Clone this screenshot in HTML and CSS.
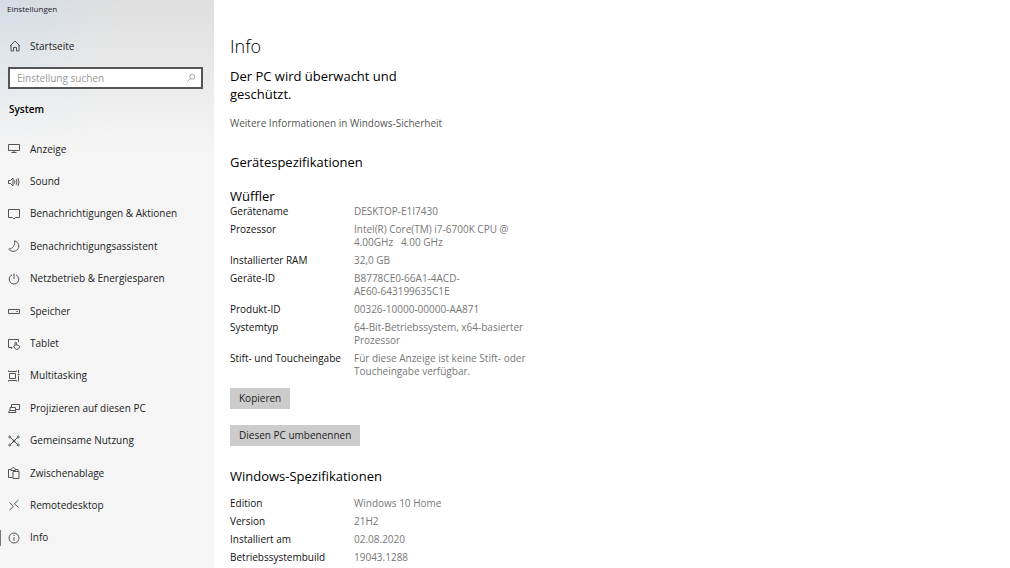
FILE: index.html
```html
<!DOCTYPE html>
<html lang="de">
<head>
  <meta charset="UTF-8" />
  <meta name="viewport" content="width=device-width, initial-scale=1" />
  <title>Einstellungen</title>
  <link rel="stylesheet" href="styles.css">
</head>
<body>
  <aside class="sidebar">
    <div class="window-title">Einstellungen</div>
    <a class="home" href="#">
      <svg class="icon" viewBox="0 0 12 12"><path d="M1 6 6 1l5 5M2 5v6h2.500V7.500h3V11H10V5" /></svg>
      <span>Startseite</span>
    </a>
    <form class="search">
      <input type="text" placeholder="Einstellung suchen" aria-label="Einstellung suchen" />
      <svg class="icon" viewBox="0 0 12 12"><circle cx="7.500" cy="4.500" r="3" /><path d="M5.400 6.600 1.500 10.500" /></svg>
    </form>
    <h2>System</h2>
    <nav class="nav">
      <a href="#">
        <svg class="icon" viewBox="0 0 12 12"><path d="M.5 1.500h11v6H.5zM6 7.500v2M3.500 9.500h5" /></svg>
        <span>Anzeige</span>
      </a>
      <a href="#">
        <svg class="icon" viewBox="0 0 12 12"><path d="M.5 4.500h2L5 2v8L2.500 7.500h-2zM6.500 4.300q1 1.700 0 3.400M8.200 3.200q1.600 2.800 0 5.600M9.900 2q2.400 4 0 8" /></svg>
        <span>Sound</span>
      </a>
      <a href="#">
        <svg class="icon" viewBox="0 0 12 12"><path d="M.5 1.500h11v8h-4L6 11 4.500 9.500h-4z" /></svg>
        <span>Benachrichtigungen &amp; Aktionen</span>
      </a>
      <a href="#">
        <svg class="icon" viewBox="0 0 12 12"><path d="M6.500.8C7.400 5 5 8.600.8 9.200 3 11.800 7 12 9.300 9.800 12.200 6.800 10.800 2 6.500.8z" /></svg>
        <span>Benachrichtigungsassistent</span>
      </a>
      <a href="#">
        <svg class="icon" viewBox="0 0 12 12"><path d="M6 .5V6M4 1.900a4.800 4.800 0 1 0 4 0" /></svg>
        <span>Netzbetrieb &amp; Energiesparen</span>
      </a>
      <a href="#">
        <svg class="icon" viewBox="0 0 12 12"><path d="M.5 4.500h11v4H.5zM8.500 6.500H10" /></svg>
        <span>Speicher</span>
      </a>
      <a href="#">
        <svg class="icon" viewBox="0 0 12 12"><path d="M4 9.500H.5v-8h10V4M3 11l1-1.500H2.500M7 8V4.500q.7-.8 1.400 0V7l2.300.5q1 .3.800 1.300-.3 2.700-2.800 2.700-1.700 0-3.200-3.200Q6.200 7.400 7 8.300" /></svg>
        <span>Tablet</span>
      </a>
      <a href="#">
        <svg class="icon" viewBox="0 0 12 12"><path d="M1.500 3.500h6v5h-6zM.5 .5v1h8v-1M.5 11.500v-1h8v1M10.500 0v3M10.500 6v5.500" /><path class="dot" d="M10.200 4h.8v1h-.8z" /></svg>
        <span>Multitasking</span>
      </a>
      <a href="#">
        <svg class="icon" viewBox="0 0 12 12"><path d="M3.500 5V2.500h8v5H8M2 5.500h5.500v3H2zM.5 10.500h7.500l-.5-2H1.500z" /></svg>
        <span>Projizieren auf diesen PC</span>
      </a>
      <a href="#">
        <svg class="icon" viewBox="0 0 12 12"><path d="M2.500 2.500 9.500 9.500M9.500 2.500 2.500 9.500" /><circle cx="1.800" cy="2" r="1" /><circle cx="10.200" cy="2" r="1" /><circle cx="1.800" cy="10" r="1" /><circle cx="10.200" cy="10" r="1" /><circle class="dot" cx="6" cy="6" r="1" /></svg>
        <span>Gemeinsame Nutzung</span>
      </a>
      <a href="#">
        <svg class="icon" viewBox="0 0 12 12"><path d="M4.500 10.500h-4v-8H3M7.500 2.500H10V4M3 3.500V2q.5 0 1-.5.5-1 1.300-1t1.200 1q.5.500 1 .5v1.500zM5 4.500h6v7H5z" /></svg>
        <span>Zwischenablage</span>
      </a>
      <a href="#">
        <svg class="icon" viewBox="0 0 12 12"><path d="M1.500 3.500 5.500 7.300 1.500 11M10.500 1 6.500 4.800l4 3.700" /></svg>
        <span>Remotedesktop</span>
      </a>
      <a class="active" href="#" aria-current="page">
        <svg class="icon" viewBox="0 0 12 12"><circle cx="6" cy="6" r="5" /><path d="M6 5.200V9M6 3v1" /></svg>
        <span>Info</span>
      </a>
    </nav>
  </aside>

  <main class="main">
    <h1>Info</h1>
    <p class="status">Der PC wird überwacht und geschützt.</p>
    <a class="security" href="#">Weitere Informationen in Windows-Sicherheit</a>

    <h2>Gerätespezifikationen</h2>
    <h3>Wüffler</h3>
    <table class="specs">
      <tr><th scope="row">Gerätename</th><td>DESKTOP-E1I7430</td></tr>
      <tr><th scope="row">Prozessor</th><td>Intel(R) Core(TM) i7-6700K CPU @ 4.00GHz &nbsp; 4.00 GHz</td></tr>
      <tr><th scope="row">Installierter RAM</th><td>32,0 GB</td></tr>
      <tr><th scope="row">Geräte-ID</th><td>B8778CE0-66A1-4ACD-<br>AE60-643199635C1E</td></tr>
      <tr><th scope="row">Produkt-ID</th><td>00326-10000-00000-AA871</td></tr>
      <tr><th scope="row">Systemtyp</th><td>64-Bit-Betriebssystem, x64-basierter Prozessor</td></tr>
      <tr><th scope="row">Stift- und Toucheingabe</th><td>Für diese Anzeige ist keine Stift- oder Toucheingabe verfügbar.</td></tr>
    </table>

    <div class="actions">
      <button type="button">Kopieren</button>
      <button type="button">Diesen PC umbenennen</button>
    </div>

    <h2>Windows-Spezifikationen</h2>
    <table class="specs">
      <tr><th scope="row">Edition</th><td>Windows 10 Home</td></tr>
      <tr><th scope="row">Version</th><td>21H2</td></tr>
      <tr><th scope="row">Installiert am</th><td>02.08.2020</td></tr>
      <tr><th scope="row">Betriebssystembuild</th><td>19043.1288</td></tr>
    </table>
  </main>
</body>
</html>
```
FILE: styles.css
```css
* {
  box-sizing: border-box;
}

body {
  margin: 0;
  font-family: "Open Sans", "Noto Sans", sans-serif;
  font-size: 10px;
  line-height: 13px;
  color: #222;
  background: #fff;
  display: flex;
  height: 100vh;
  overflow: hidden;
}

a {
  color: inherit;
  text-decoration: none;
}

h1, h2, h3, p {
  margin: 0;
  font-weight: 400;
}

.icon {
  width: 12px;
  height: 12px;
  flex: none;
  fill: none;
  stroke: #555;
  stroke-width: 1;
}

.icon .dot {
  fill: #444;
}

/* Sidebar */
.sidebar {
  width: 214px;
  flex: none;
  display: flex;
  flex-direction: column;
  padding-bottom: 14px;
  background:
    linear-gradient(to bottom, transparent, #f5f5f5 150px),
    linear-gradient(to right, #d3dce5, #dfdfdf 120px);
}

.window-title {
  padding: 3px 7px 0;
  font-size: 8px;
  line-height: 12px;
}

.home {
  display: flex;
  align-items: center;
  gap: 9px;
  padding: 0 9px;
  margin-top: 21px;
  line-height: 20px;
}

.search {
  display: flex;
  align-items: center;
  height: 22px;
  margin: 11px 11px 0 8px;
  padding: 0 5px 0 7px;
  border: 2px solid #555;
  background: #fff;
}

.search input {
  flex: 1;
  min-width: 0;
  padding: 0;
  border: none;
  outline: none;
  font: inherit;
  background: none;
}

.search input::placeholder {
  color: #999;
}

.search .icon {
  width: 10px;
  height: 10px;
  stroke: #999;
}

.sidebar h2 {
  margin: 14px 9px 17px;
  font-size: 10px;
  font-weight: 600;
  color: #000;
}

.nav {
  flex: 1;
  display: flex;
  flex-direction: column;
}

.nav a {
  flex: 1;
  display: flex;
  align-items: center;
  gap: 10px;
  padding-left: 8px;
}

.nav .active {
  background: linear-gradient(#777, #777) left center / 1px 16px no-repeat;
}

/* Content */
.main {
  flex: 1;
  padding: 34px 16px 0;
}

.main h1 {
  font-size: 18px;
  font-weight: 300;
  line-height: 24px;
  color: #000;
}

.status {
  max-width: 180px;
  margin-top: 9px;
  font-size: 13px;
  line-height: 18px;
  color: #000;
}

.security {
  display: block;
  margin-top: 14px;
  color: #555;
}

.main h2 {
  margin-top: 23px;
  font-size: 13px;
  line-height: 18px;
  color: #000;
}

.main h3 {
  margin-top: 17px;
  font-size: 13px;
  line-height: 17px;
  color: #000;
}

.specs {
  border-collapse: collapse;
  width: 304px;
}

.specs th, .specs td {
  padding: 0 0 5px;
  text-align: left;
  vertical-align: top;
  font-weight: 400;
}

.specs th {
  width: 124px;
  color: #111;
}

.specs td {
  color: #777;
}

h2 + .specs {
  margin-top: 12px;
}

.actions {
  display: flex;
  flex-direction: column;
  align-items: flex-start;
  gap: 16px;
  margin: 5px 0 -2px;
}

.actions button {
  height: 21px;
  padding: 0 9px;
  border: none;
  font: inherit;
  color: #222;
  background: #ccc;
}
```
